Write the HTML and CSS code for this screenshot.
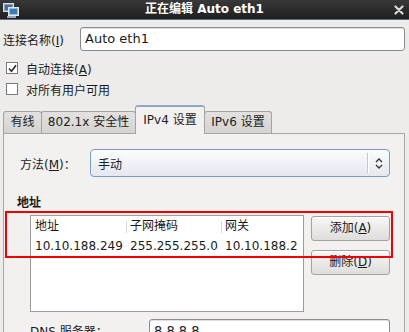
FILE: index.html
```html
<!DOCTYPE html>
<html lang="zh-CN">
<head>
<meta charset="utf-8">
<title>正在编辑 Auto eth1</title>
<link rel="stylesheet" href="styles.css">
</head>
<body>
<div class="titlebar">
  <span class="app-icon">
    <svg width="16" height="16" viewBox="0 0 16 16">
      <rect x="0.5" y="1.5" width="10" height="8" fill="#8ea3b8" stroke="#d5dde6"/>
      <rect x="2" y="3" width="7" height="5" fill="#3f6f9e"/>
      <rect x="5.5" y="5.5" width="10" height="8" fill="#a9b8c7" stroke="#e4e9ef"/>
      <rect x="7" y="7" width="7" height="5" fill="#2f7fc6"/>
      <rect x="4" y="14" width="9" height="2" fill="#9aa6b2"/>
    </svg>
  </span>
  <span class="title">正在编辑 Auto eth1</span>
  <span class="close">
    <svg width="10" height="10" viewBox="0 0 10 10">
      <path d="M1.5 1.5 L8.5 8.5 M8.5 1.5 L1.5 8.5" stroke="#d8d8d8" stroke-width="2.2" stroke-linecap="round"/>
    </svg>
  </span>
</div>

<div class="main">
  <div class="name-row">
    <span class="name-label">连接名称(<u>I</u>)</span>
    <div class="entry">Auto eth1</div>
  </div>

  <div class="check-row first">
    <span class="checkbox checked">
      <svg width="9" height="9" viewBox="0 0 9 9"><path d="M1 4.5 L3.5 7.2 L8 1.2" fill="none" stroke="#2a2a2a" stroke-width="1.6"/></svg>
    </span>
    <span>自动连接(<u>A</u>)</span>
  </div>
  <div class="check-row">
    <span class="checkbox"></span>
    <span>对所有用户可用</span>
  </div>

  <div class="notebook">
    <div class="tabs">
      <span class="tab t1">有线</span>
      <span class="tab t2">802.1x 安全性</span>
      <span class="tab active">IPv4 设置</span>
      <span class="tab t4">IPv6 设置</span>
    </div>
    <div class="panel">
      <div class="method-row">
        <span class="method-label">方法(<u>M</u>)：</span>
        <div class="combo">
          <span class="combo-text">手动</span>
          <span class="combo-sep"></span>
          <span class="combo-arrow">
            <svg width="8" height="11" viewBox="0 0 8 11"><path d="M1 4 L4 1 L7 4 M1 7 L4 10 L7 7" fill="none" stroke="#333" stroke-width="1.3"/></svg>
          </span>
        </div>
      </div>

      <div class="section-title">地址</div>

      <div class="address-area">
        <div class="addr-table">
          <div class="th">地址</div>
          <div class="th sep">子网掩码</div>
          <div class="th sep">网关</div>
          <div class="td">10.10.188.249</div>
          <div class="td">255.255.255.0</div>
          <div class="td">10.10.188.2</div>
        </div>
        <div class="addr-buttons">
          <div class="button">添加(<u>A</u>)</div>
          <div class="button">删除(<u>D</u>)</div>
        </div>
      </div>

      <div class="dns-row">
        <span class="dns-label">DNS 服务器：</span>
        <div class="entry dns-entry">8.8.8.8</div>
      </div>
    </div>
  </div>
</div>

<div class="highlight"></div>
</body>
</html>
```

FILE: styles.css
```css
* { box-sizing: border-box; }

html, body {
  margin: 0;
  padding: 0;
}

body {
  width: 409px;
  height: 332px;
  overflow: hidden;
  background: #edeceb;
  font-family: "DejaVu Sans", "Noto Sans CJK SC", sans-serif;
  font-size: 12px;
  color: #1a1a1a;
}

u { text-decoration: underline; text-underline-offset: 1px; }

/* title bar */
.titlebar {
  height: 20px;
  display: grid;
  grid-template-columns: 20px 1fr 20px;
  align-items: center;
  background: linear-gradient(#383838, #1f1f1f);
  border-bottom: 1px solid #5f6f86;
}
.app-icon { display: flex; padding-left: 3px; }
.title {
  text-align: center;
  color: #ffffff;
  font-weight: bold;
  font-size: 12px;
  line-height: 19px;
}
.close { display: flex; justify-content: flex-start; padding-left: 5px; }

.main { padding: 0 4px 0 3px; }

/* name row */
.name-row {
  display: flex;
  align-items: center;
  margin-top: 7px;
  height: 24px;
}
.name-label { width: 77px; flex: none; }
.entry {
  flex: 1;
  height: 24px;
  background: #fff;
  border: 1px solid #8c8c8c;
  border-radius: 3px;
  padding: 0 0 0 4px;
  line-height: 22px;
  font-size: 13px;
  box-shadow: inset 0 1px 0 #e0e0e0;
}

/* checkboxes */
.check-row {
  display: flex;
  align-items: center;
  height: 16px;
  margin-top: 5px;
  padding-left: 3px;
  gap: 8px;
}
.check-row.first { margin-top: 9px; }
.checkbox {
  width: 12px;
  height: 12px;
  background: #fff;
  border: 1px solid #7a7a7a;
  display: flex;
  align-items: center;
  justify-content: center;
}

/* notebook */
.notebook { margin-top: 8px; }
.tabs {
  display: flex;
  align-items: flex-end;
  height: 28px;
}
.tab {
  height: 22px;
  line-height: 20px;
  padding: 0;
  text-align: center;
  white-space: nowrap;
  background: linear-gradient(#e2e1df, #d4d3d0);
  border: 1px solid #a3a3a3;
  border-bottom: none;
  border-radius: 3px 3px 0 0;
  margin-right: -1px;
  color: #222;
}
.tab.t1 { width: 39px; }
.tab.t2 { width: 95px; }
.tab.t4 { width: 68px; }
.tab.active {
  width: 70px;
  height: 29px;
  line-height: 26px;
  background: #f2f1f0;
  border-color: #8fa8c8 #a3a3a3 #a3a3a3 #a3a3a3;
  border-top: 2px solid #8fa8c8;
  position: relative;
  z-index: 1;
  margin-bottom: -1px;
}

.panel {
  background: #f2f1f0;
  border: 1px solid #a6a6a6;
  border-bottom: none;
  height: 200px;
  padding: 15px 13px 0 13px;
}

/* method */
.method-row {
  display: flex;
  align-items: center;
  height: 28px;
  padding-left: 3px;
}
.method-label { width: 70px; flex: none; }
.combo {
  width: 300px;
  height: 28px;
  border: 1px solid #7b9bc7;
  border-radius: 4px;
  background: linear-gradient(#fbfcfd, #e4e8ee);
  display: flex;
  align-items: center;
  box-shadow: inset 0 1px 0 #ffffff;
}
.combo-text { flex: 1; padding-left: 7px; }
.combo-sep { width: 2px; height: 20px; background: #c5c9cf; border-right: 1px solid #fff; }
.combo-arrow { width: 20px; display: flex; justify-content: center; }

.section-title {
  font-weight: bold;
  margin-top: 18px;
  height: 16px;
  line-height: 16px;
}

/* addresses */
.address-area {
  display: flex;
  gap: 7px;
  margin-top: 4px;
  padding-left: 13px;
}
.addr-table {
  width: 274px;
  height: 97px;
  background: #fff;
  border: 1px solid #9d9d9d;
  display: grid;
  grid-template-columns: 95px 95px 1fr;
  grid-template-rows: 20px 21px;
  align-content: start;
}
.th {
  padding-left: 4px;
  line-height: 20px;
  position: relative;
}
.th.sep::before {
  content: "";
  position: absolute;
  left: 0;
  top: 5px;
  height: 12px;
  width: 1px;
  background: #d8d8d8;
}
.td {
  padding-left: 4px;
  line-height: 21px;
  font-size: 12px;
}

.addr-buttons {
  display: flex;
  flex-direction: column;
  gap: 9px;
  padding-top: 1px;
}
.button {
  width: 79px;
  height: 25px;
  border: 1px solid #a2a2a2;
  border-radius: 3px;
  background: linear-gradient(#f7f7f6, #dedddb);
  text-align: center;
  line-height: 23px;
  box-shadow: inset 0 1px 0 #fff;
}

/* dns */
.dns-row {
  display: flex;
  align-items: flex-start;
  margin-top: 7px;
  padding-left: 13px;
}
.dns-label { width: 119px; flex: none; padding-top: 3px; }
.dns-entry { flex: none; width: 241px; }

.highlight {
  position: absolute;
  left: 5px;
  top: 211px;
  width: 388px;
  height: 47px;
  border: 2px solid #f20000;
}
```
